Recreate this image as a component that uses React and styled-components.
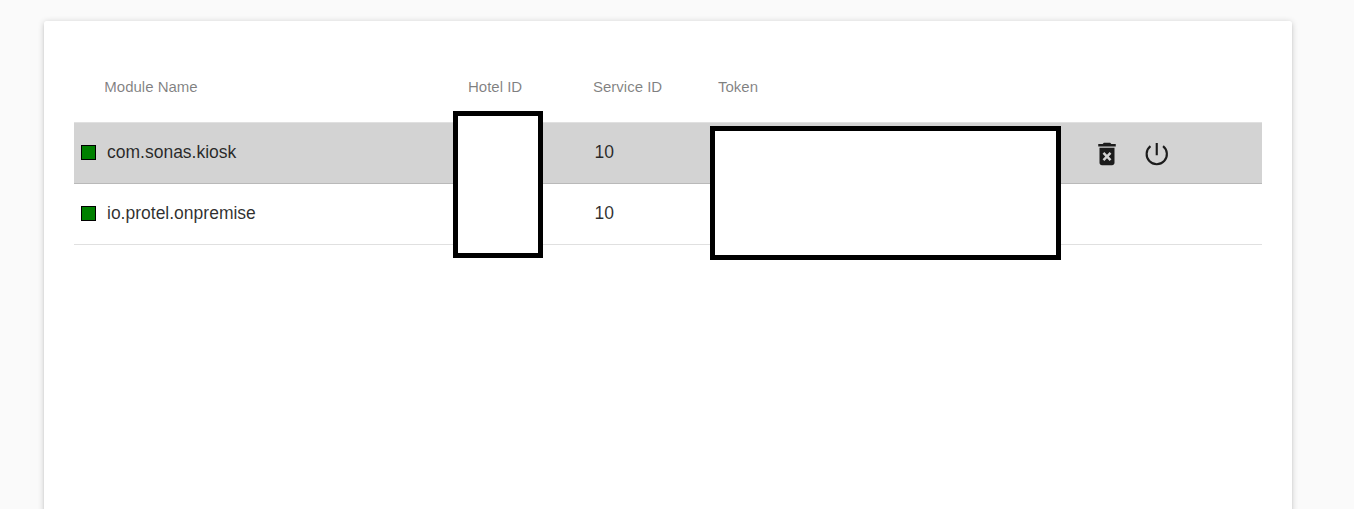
import React from 'react';
import styled, { createGlobalStyle } from 'styled-components';

const GlobalStyle = createGlobalStyle`
  * { box-sizing: border-box; }
  body {
    margin: 0;
    background: #fafafa;
    font-family: "Liberation Sans", Arial, sans-serif;
    overflow: hidden;
  }
`;

const Page = styled.main`
  height: 509px;
  padding: 21px 62px 0 44px;
  overflow: hidden;
`;

const Card = styled.section`
  height: 560px;
  padding: 30px;
  background: #fff;
  border-radius: 2.5px;
  box-shadow: 0 1px 6px rgba(0, 0, 0, 0.2), 0 2px 2px rgba(0, 0, 0, 0.08);
`;

const Table = styled.div`
  position: relative;
`;

const Row = styled.div`
  display: grid;
  grid-template-columns: 394px 125px 125px 366px 1fr;
  align-items: center;
  height: ${(p) => (p.$header ? 72 : 61)}px;
  background: ${(p) => (p.$active ? '#d3d3d3' : 'transparent')};
  border-bottom: 1px solid rgba(0, 0, 0, 0.12);
`;

const HeaderCell = styled.div`
  padding-left: ${(p) => (p.$first ? 30.3 : 0)}px;
  font-size: 15px;
  line-height: 18px;
  color: rgba(0, 0, 0, 0.5);
`;

const Cell = styled.div`
  display: flex;
  align-items: center;
  font-size: 17.5px;
  line-height: 20px;
  color: rgba(0, 0, 0, 0.82);
  padding: 0 0 2px ${(p) => (p.$inset ? 1.5 : 0)}px;
`;

const Status = styled.span`
  width: 15px;
  height: 15px;
  margin: 0 11px 0 7px;
  border: 1px solid #000;
  background: #008000;
`;

const Actions = styled.div`
  display: flex;
  gap: 20px;
  padding: 2px 0 0 7.5px;
`;

const Icon = styled.svg`
  display: block;
  width: 30px;
  height: 30px;
  fill: rgba(0, 0, 0, 0.87);
`;

const LineIcon = styled(Icon)`
  fill: none;
  stroke: rgba(0, 0, 0, 0.87);
  stroke-width: 1.7;
`;

const Mask = styled.div`
  position: absolute;
  left: ${(p) => p.$left}px;
  top: ${(p) => p.$top}px;
  width: ${(p) => p.$width}px;
  height: ${(p) => p.$height}px;
  border: 5px solid #000;
  background: #fff;
`;

const modules = [
  { name: 'com.sonas.kiosk', service: '10', active: true },
  { name: 'io.protel.onpremise', service: '10', active: false },
];

export default function App() {
  return (
    <>
      <GlobalStyle />
      <Page>
        <Card>
          <Table>
            <Row $header>
              <HeaderCell $first>Module Name</HeaderCell>
              <HeaderCell>Hotel ID</HeaderCell>
              <HeaderCell>Service ID</HeaderCell>
              <HeaderCell>Token</HeaderCell>
            </Row>
            {modules.map((m) => (
              <Row key={m.name} $active={m.active}>
                <Cell><Status />{m.name}</Cell>
                <Cell />
                <Cell $inset>{m.service}</Cell>
                <Cell />
                {m.active && (
                  <Actions>
                    <Icon viewBox="0 0 24 24">
                      <path d="M6 19c0 1.1.9 2 2 2h8c1.1 0 2-.9 2-2V7H6v12zm2.46-7.12l1.41-1.41L12 12.59l2.12-2.12 1.41 1.41L13.41 14l2.12 2.12-1.41 1.41L12 15.41l-2.12 2.12-1.41-1.41L10.59 14l-2.13-2.12zM15.5 4l-1-1h-5l-1 1H5v2h14V4z" />
                    </Icon>
                    <LineIcon viewBox="0 0 24 24">
                      <path d="M11.8 3.1v9.8M6.75 5.75a8.1 8.1 0 1 0 10.1 0" />
                    </LineIcon>
                  </Actions>
                )}
              </Row>
            ))}
            <Mask $left={379} $top={60} $width={90} $height={147} />
            <Mask $left={636} $top={75} $width={351} $height={134} />
          </Table>
        </Card>
      </Page>
    </>
  );
}
